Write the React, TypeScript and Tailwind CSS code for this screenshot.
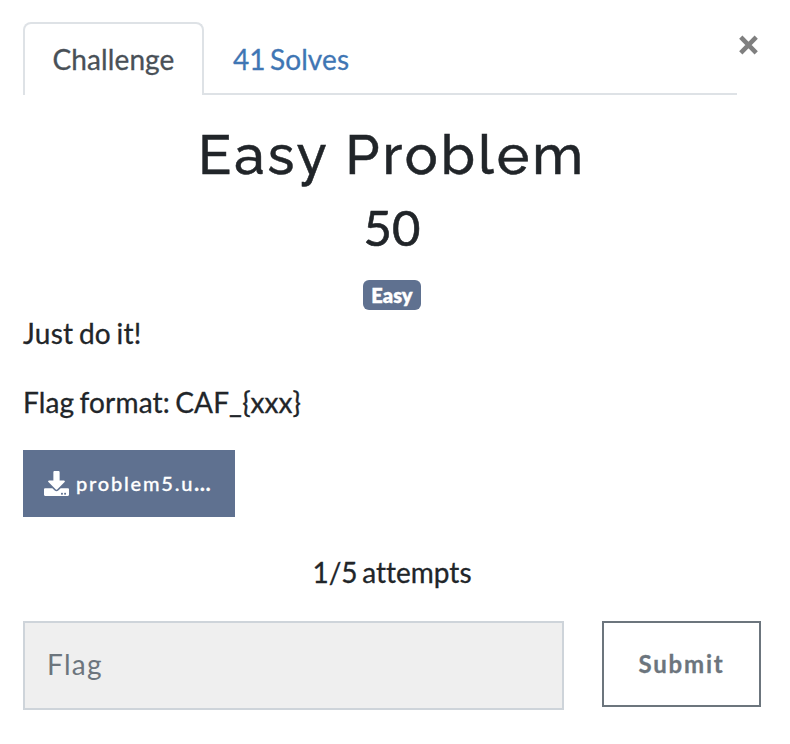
import React from "react";
import { FaDownload } from "react-icons/fa";

export default function App() {
  return (
    <div className="h-[744px] w-[790px] overflow-hidden bg-white pl-[23px] pt-[22px] font-[Lato,sans-serif] text-[28px] leading-[42px] text-[#212529] [font-variant-ligatures:none] [-webkit-text-stroke:0.3px]">
      <header className="flex items-start">
        <nav className="flex h-[73px] w-[714px] border-b-2 border-[#dee2e6]">
          <button className="h-[73px] w-[181px] rounded-t-[8px] border-2 border-b-0 border-[#dee2e6] bg-white pb-[2px] tracking-[0.1px] text-[#495057]">Challenge</button>
          <button className="ml-[29px] h-[73px] tracking-[0.1px] text-[#3f76b4] [word-spacing:-3px]">41 Solves</button>
        </nav>
        <button aria-label="Close" className="ml-[1px] mt-[12px] text-[#7f7f7f]">
          <svg width="22" height="22" viewBox="0 0 22 22" stroke="currentColor" strokeWidth="4.6"><path d="M2.8 3.2L18.2 18.8M18.2 3.2L2.8 18.8" /></svg>
        </button>
      </header>
      <main className="w-[738px]">
        <h2 className="mt-[26px] text-center font-[Raleway,Lato,sans-serif] text-[55px] font-medium leading-[67px] tracking-[3px] [-webkit-text-stroke:0.5px]">Easy Problem</h2>
        <h3 className="mt-[6px] text-center text-[49px] font-normal leading-[67px] [-webkit-text-stroke:0.6px]">50</h3>
        <div className="mt-[19px] flex justify-center"><span className="h-[30px] w-[58px] rounded-[6px] bg-[#5f7190] text-center text-[20px] font-extrabold leading-[31px] text-white">Easy</span></div>
        <p className="mt-[2px] tracking-[0.3px] [word-spacing:-2px]">Just do it!</p>
        <p className="mt-[27px] tracking-[0.15px] [word-spacing:-2px]">Flag format: CAF_{"{xxx}"}</p>
        <button className="mt-[27px] flex h-[67px] w-[212px] items-center gap-[7px] bg-[#5f7190] pb-[1px] pl-[21px] text-[20px] font-medium tracking-[1.8px] text-white"><FaDownload size={25} strokeWidth={0} /><span className="flex">problem5.u<span className="font-black tracking-[1px]">...</span></span></button>
        <p className="mt-[34px] text-center [word-spacing:-2.5px]">1/5 attempts</p>
        <form className="mt-[28px] flex items-start justify-between">
          <input placeholder="Flag" className="h-[89px] w-[541px] border-2 border-[#ced4da] bg-[#efefef] px-[22px] pb-[4px] tracking-[1.3px] [-webkit-text-stroke:0px] placeholder:text-[#6c757d]" />
          <button type="button" className="h-[86px] w-[159px] border-2 border-[#6c757d] text-[24px] font-bold tracking-[1.8px] text-[#6c757d]">Submit</button>
        </form>
      </main>
    </div>
  );
}
